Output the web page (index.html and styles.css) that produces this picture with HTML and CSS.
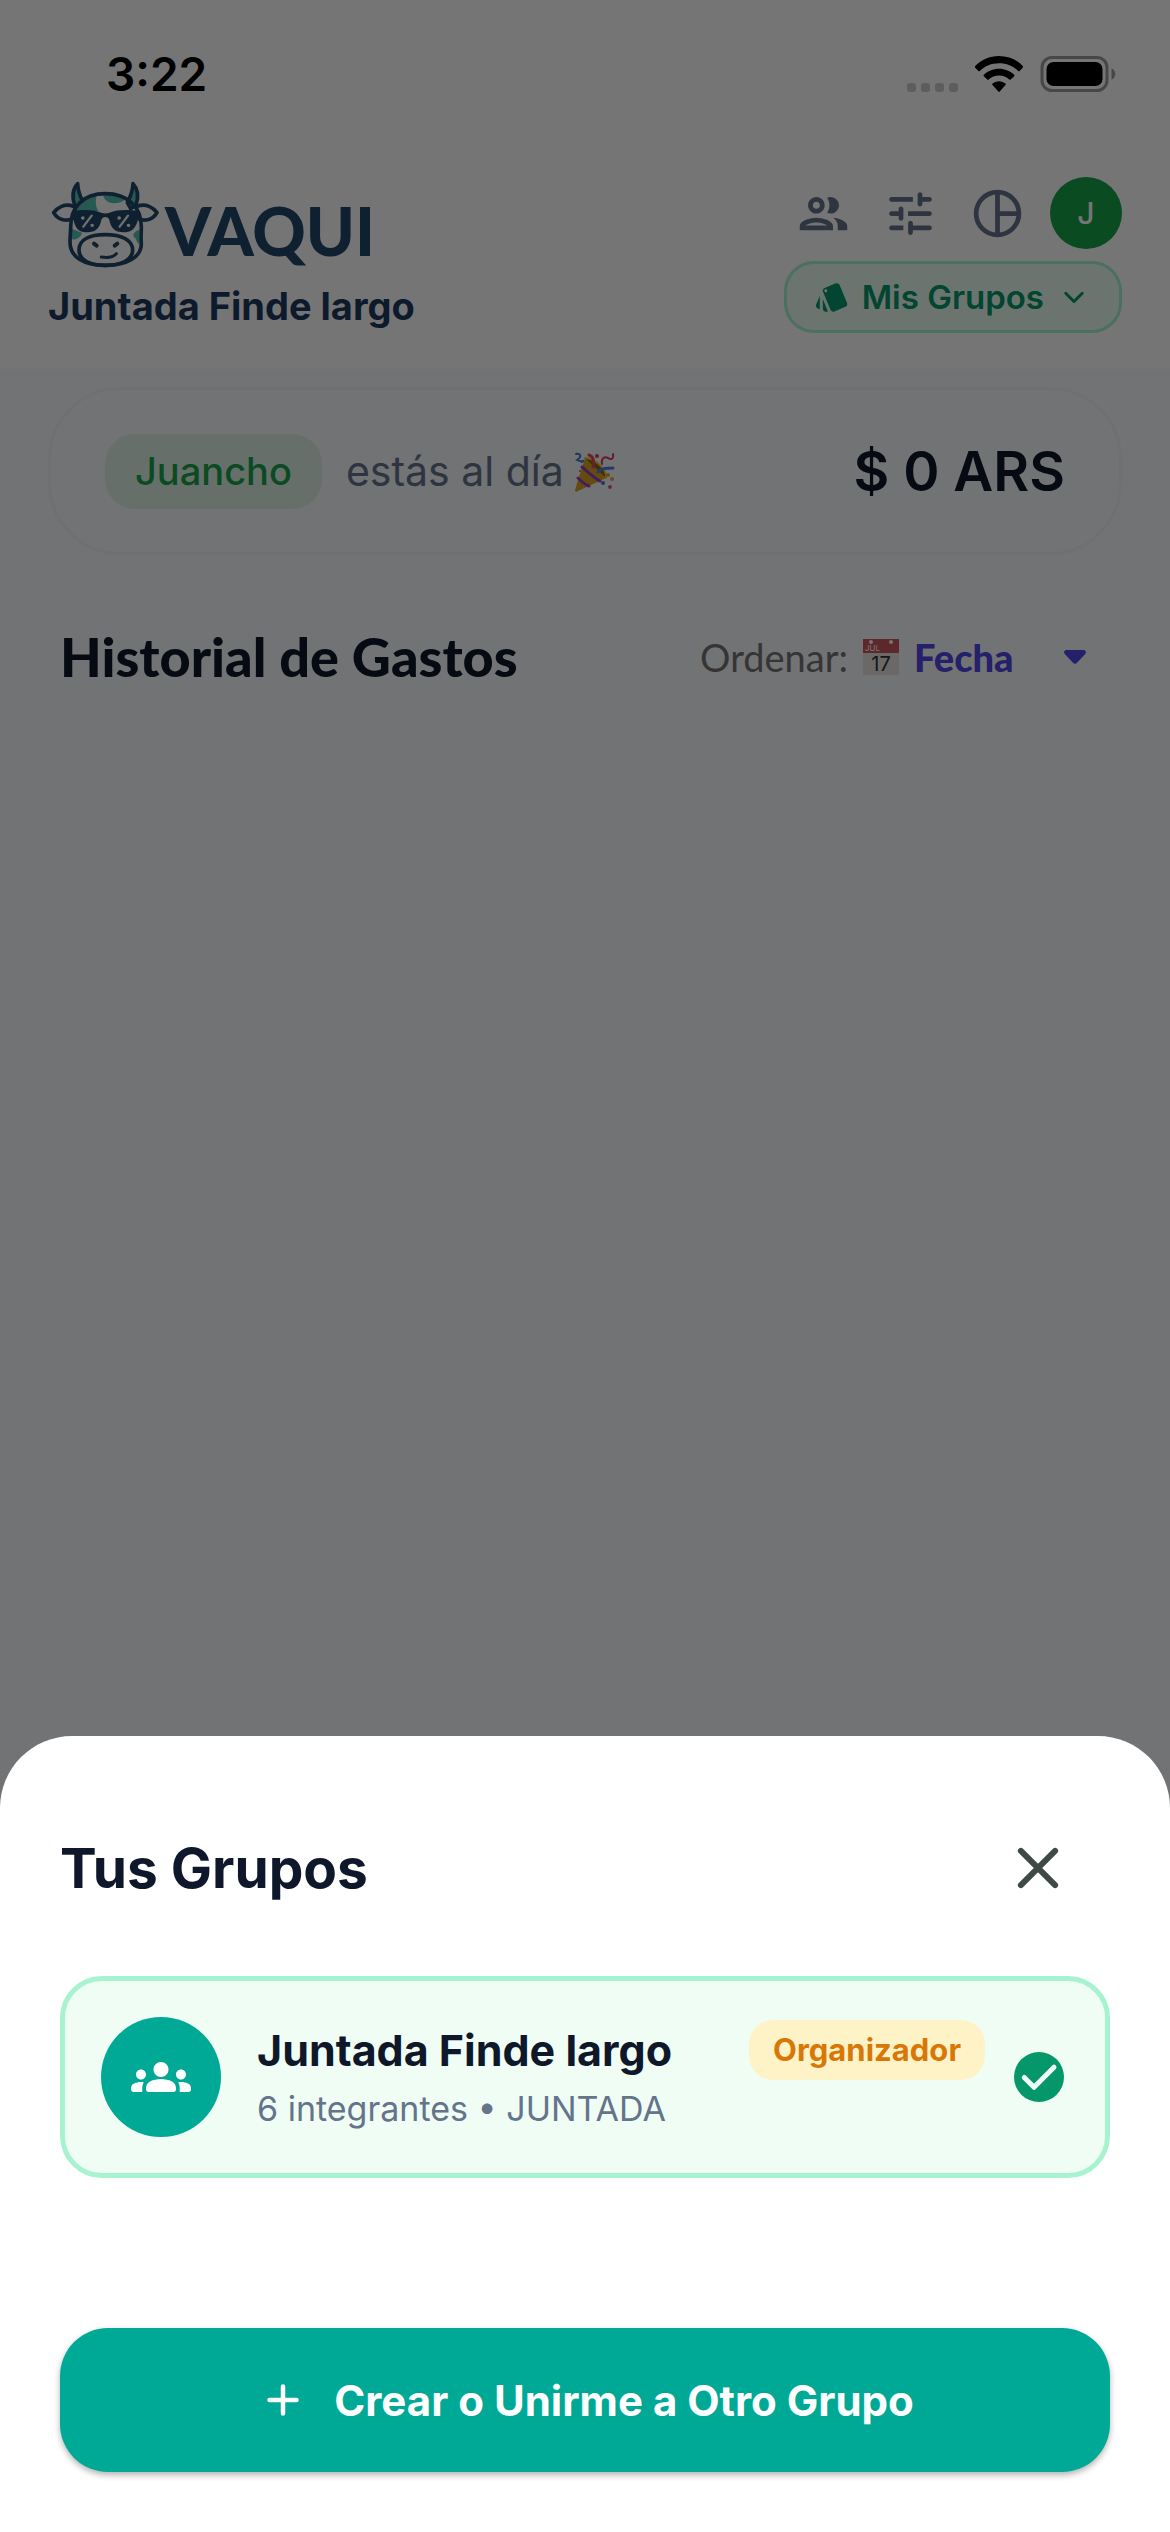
FILE: index.html
```html
<!DOCTYPE html>
<html lang="es">
<head>
    <meta charset="UTF-8">
    <meta name="viewport" content="width=device-width, initial-scale=1.0">
    <title>Vaqui - Tus Grupos</title>
    <link rel="stylesheet" href="styles.css">
</head>
<body>
    <div class="app">
        <div class="top">
            <div class="status-bar">
                <span class="time">3:22</span>
                <div class="status-icons">
                    <svg class="signal" viewBox="0 0 51 36" fill="#cbcbcb">
                        <rect x="0" y="27" width="9" height="9" rx="3"/>
                        <rect x="14" y="27" width="9" height="9" rx="3"/>
                        <rect x="28" y="27" width="9" height="9" rx="3"/>
                        <rect x="42" y="27" width="9" height="9" rx="3"/>
                    </svg>
                    <svg class="wifi" viewBox="0 0 48 36">
                        <path d="M24 0C14.500 0 6 3.800 0 10.200c-.4.400-.4 1 0 1.400l3.400 3.400c.4.400 1 .4 1.400 0C9.800 10 16.500 7.300 24 7.300S38.200 10 43.200 15c.4.400 1 .4 1.400 0l3.400-3.400c.4-.4.4-1 0-1.400C42 3.800 33.500 0 24 0z"/>
                        <path d="M24 12.700c-6 0-11.300 2.300-15.200 6.100-.4.400-.4 1 0 1.400l3.500 3.400c.4.400 1 .4 1.400 0 2.700-2.500 6.300-4 10.300-4s7.600 1.500 10.300 4c.4.400 1 .4 1.400 0l3.500-3.400c.4-.4.4-1 0-1.400-3.900-3.800-9.200-6.100-15.200-6.100z"/>
                        <path d="M24 25.200c-2.500 0-4.800.9-6.500 2.400-.4.400-.4.900 0 1.300l5.800 6.700c.4.400 1 .4 1.400 0l5.800-6.700c.4-.4.4-.9 0-1.300-1.700-1.500-4-2.400-6.500-2.400z"/>
                    </svg>
                    <svg class="battery" viewBox="0 0 75 36">
                        <rect x="1.500" y="1.500" width="65" height="33" rx="10" fill="none" stroke="#9c9c9c" stroke-width="3"/>
                        <rect x="6" y="6" width="56" height="24" rx="7"/>
                        <path d="M71 12.500c5 1.500 5 9.500 0 11z" fill="#9c9c9c"/>
                    </svg>
                </div>
            </div>

            <header class="header">
                <div class="brand">
                    <div class="logo">
                        <svg class="cow" viewBox="0 0 342 282" fill="none" stroke="#224869" stroke-width="11" stroke-linecap="round" stroke-linejoin="round">
                            <path d="M106 77C98 61 90 48 89 20c-17 18-16 42-9 64l16 11z" fill="#55c2b6"/>
                            <path d="M238 77c8-16 16-29 17-57 17 18 16 42 9 64l-16 11z" fill="#55c2b6"/>
                            <path d="M76 88C50 78 28 92 17 107c16 25 40 26 57 18"/>
                            <path d="M268 88c26-10 48 4 59 19-16 25-40 26-57 18"/>
                            <path d="M146 54c-28 4-56 24-67 48h72c-10-15-8-33-5-48z" fill="#55c2b6" stroke="none"/>
                            <path d="M166 55c30-4 52 3 64 14-20 14-58 16-64-14zM72 155c12 6 26 10 30 12-4 13-14 22-31 20zM274 158c-17 6-24 18-12 25 4 9 6 14 12 20z" fill="#55c2b6" stroke="none"/>
                            <path d="M68 150C68 90 105 50 172 50s108 40 108 100c0 20-2 30 0 50 0 40-42 65-108 65S66 240 66 195c0-18 2-30 2-45z"/>
                            <path d="M172 173c46 0 82 14 82 46 0 31-36 46-82 46s-79-15-79-46c0-32 33-46 79-46z"/>
                            <path d="M72 103c30-5 62-6 88 4 8 3 16 3 24 0 26-10 60-9 90-4v18c-5 3-4 10-7 17-8 20-20 28-40 28-28 0-38-14-43-37-3-12-21-12-24 0-5 23-15 37-43 37-20 0-32-8-38-28-2-7-2-14-7-17z" fill="#224869" stroke="none"/>
                            <g stroke="#eef5f8" stroke-width="7">
                                <path d="M131 116l-25 33M240 116l-25 33"/>
                                <path d="M104 123h1M132 145h1M213 123h1M241 145h1" stroke-width="10"/>
                            </g>
                            <path d="M138 200l8 6M208 200l-8 6" stroke-width="12"/>
                            <path d="M160 240c18 3 36 0 45-10" stroke-width="9"/>
                        </svg>
                        <span class="logo-text">VAQUI</span>
                    </div>
                    <h1 class="group-name">Juntada Finde largo</h1>
                </div>

                <div class="header-actions">
                    <div class="icon-row">
                        <button class="icon-btn" aria-label="Integrantes">
                            <svg viewBox="0 0 24 24" fill="currentColor"><path d="M9 13.750c-2.340 0-7 1.170-7 3.500V19h14v-1.750c0-2.330-4.660-3.500-7-3.500zM4.340 17c.84-.58 2.870-1.250 4.660-1.250s3.820.67 4.660 1.250H4.340zM9 12c1.930 0 3.500-1.570 3.500-3.500S10.930 5 9 5 5.500 6.570 5.500 8.500 7.070 12 9 12zm0-5c.83 0 1.500.67 1.500 1.500S9.830 10 9 10s-1.500-.67-1.500-1.500S8.170 7 9 7zm7.040 6.810c1.160.84 1.960 1.960 1.960 3.440V19h4v-1.750c0-2.020-3.500-3.170-5.960-3.440zM15 12c1.930 0 3.500-1.570 3.500-3.500S16.930 5 15 5c-.54 0-1.040.13-1.500.35.63.89 1 1.980 1 3.150s-.37 2.260-1 3.150c.46.22.96.35 1.500.35z"/></svg>
                        </button>
                        <button class="icon-btn" aria-label="Ajustes">
                            <svg viewBox="0 0 24 24" fill="currentColor"><path d="M3 18c0 .55.45 1 1 1h5v-2H4c-.55 0-1 .45-1 1zM3 6c0 .55.45 1 1 1h9V5H4c-.55 0-1 .45-1 1zm10 14v-1h7c.55 0 1-.45 1-1s-.45-1-1-1h-7v-1c0-.55-.45-1-1-1s-1 .45-1 1v4c0 .55.45 1 1 1s1-.45 1-1zM7 10v1H4c-.55 0-1 .45-1 1s.45 1 1 1h3v1c0 .55.45 1 1 1s1-.45 1-1v-4c0-.55-.45-1-1-1s-1 .45-1 1zm14 2c0-.55-.45-1-1-1h-9v2h9c.55 0 1-.45 1-1zm-5-3c.55 0 1-.45 1-1V7h3c.55 0 1-.45 1-1s-.45-1-1-1h-3V4c0-.55-.45-1-1-1s-1 .45-1 1v4c0 .55.45 1 1 1z"/></svg>
                        </button>
                        <button class="icon-btn" aria-label="Resumen">
                            <svg viewBox="0 0 24 24" fill="none" stroke="currentColor" stroke-width="2"><circle cx="12" cy="12" r="9"/><path d="M12 3v18M12 12h9"/></svg>
                        </button>
                        <button class="avatar">J</button>
                    </div>
                    <button class="groups-btn">
                        <svg viewBox="0 0 24 24" fill="currentColor"><path d="M2.530 19.650l1.340.56v-9.030l-2.430 5.860c-.41 1.020.08 2.190 1.090 2.610zm19.500-3.700L17.070 3.980c-.31-.75-1.040-1.210-1.810-1.230-.26 0-.53.040-.79.15L7.100 5.950c-.75.310-1.210 1.030-1.230 1.800-.01.27.04.54.15.8l4.960 11.970c.31.76 1.050 1.220 1.830 1.230.26 0 .52-.05.77-.15l7.360-3.050c1.020-.42 1.510-1.590 1.090-2.600zM7.880 8.750c-.55 0-1-.45-1-1s.45-1 1-1 1 .45 1 1-.45 1-1 1zm-2 11c0 1.100.9 2 2 2h1.450l-3.450-8.340v6.340z"/></svg>
                        Mis Grupos
                        <svg viewBox="0 0 24 24" fill="none" stroke="currentColor" stroke-width="2" stroke-linecap="round" stroke-linejoin="round"><path d="M6.500 9.500L12 15l5.500-5.500"/></svg>
                    </button>
                </div>
            </header>
        </div>

        <main>
            <section class="balance">
                <span class="chip">Juancho</span>
                <span class="balance-text">estás al día</span>
                <svg class="party" viewBox="0 0 52 52" fill="none" stroke-linecap="round" role="img" aria-label="Fiesta">
                    <path d="M15 13L5 45c0 2 2 2 3 1l28-13C31 27 21 17 15 13z" fill="#d9a520"/>
                    <path d="M15 13c9 0 22 11 21 20" fill="#8a6516" stroke="#f0c43c" stroke-width="2"/>
                    <path d="M12 22c6 5 12 11 18 14M8 33c4 4 8 7 11 8" stroke="#9a3fc4" stroke-width="3"/>
                    <path d="M19 10c5 1 5 6 4 12" stroke="#e0476a" stroke-width="3"/>
                    <path d="M28 27c4-4 9-4 15-4" stroke="#4a86dc" stroke-width="3"/>
                    <path d="M6 9c5-1 6 3 1 6 5 3 8-1 5 2" stroke="#3f7ad6" stroke-width="2"/>
                    <path d="M43 9c1 5-2 6-5 4-4-2-7 1-6 6" stroke="#d8405f" stroke-width="2"/>
                    <g stroke="none">
                        <circle cx="27" cy="11" r="2" fill="#d8405f"/><circle cx="10" cy="26" r="1" fill="#e0476a"/>
                        <circle cx="33" cy="38" r="2" fill="#3f7ad6"/><circle cx="38" cy="30" r="2" fill="#d9a520"/>
                        <circle cx="42" cy="34" r="2" fill="#e8a33c"/><circle cx="40" cy="42" r="2" fill="#d8607f"/>
                    </g>
                </svg>
                <strong class="amount">$ 0 ARS</strong>
            </section>

            <section class="history-head">
                <h2>Historial de Gastos</h2>
                <div class="sort">
                    <label for="sort">Ordenar:</label>
                    <svg class="calendar" viewBox="0 0 36 36" aria-hidden="true">
                        <rect width="36" height="36" fill="#e6e4e2"/>
                        <rect width="36" height="14" fill="#c9575a"/>
                        <circle cx="8" cy="3" r="2" fill="#fff"/><circle cx="28" cy="3" r="2" fill="#fff"/>
                        <text x="2" y="12" class="cal-month">JUL</text>
                        <text x="18" y="32" class="cal-day">17</text>
                    </svg>
                    <select id="sort">
                        <option>Fecha</option>
                    </select>
                    <svg class="caret" viewBox="0 0 22 14" fill="currentColor"><path d="M2.500 0h17c2.200 0 3.300 2.500 1.700 4l-8.200 8.800c-1.200 1.200-2.800 1.200-4 0L.8 4C-.8 2.500.300 0 2.500 0z"/></svg>
                </div>
            </section>
        </main>
    </div>

    <div class="overlay">
        <div class="sheet" role="dialog" aria-labelledby="sheet-title">
            <div class="sheet-head">
                <h2 id="sheet-title">Tus Grupos</h2>
                <button class="close-btn" aria-label="Cerrar">
                    <svg viewBox="0 0 24 24" fill="none" stroke="currentColor" stroke-width="2" stroke-linecap="round"><path d="M6.300 6.300l11.400 11.400M17.700 6.300L6.300 17.700"/></svg>
                </button>
            </div>

            <button class="group-card">
                <span class="group-icon">
                    <svg viewBox="0 0 24 24" fill="currentColor"><path d="M12 12.750c1.630 0 3.070.39 4.240.9 1.080.48 1.760 1.560 1.760 2.730V17c0 .55-.45 1-1 1H7c-.55 0-1-.45-1-1v-.61c0-1.180.68-2.260 1.760-2.730 1.170-.52 2.610-.91 4.240-.91zM4 13c1.100 0 2-.9 2-2s-.9-2-2-2-2 .9-2 2 .9 2 2 2zm1.130 1.100c-.37-.06-.74-.1-1.130-.1-.99 0-1.930.21-2.780.58C.48 14.900 0 15.620 0 16.430V17c0 .55.45 1 1 1h3.500v-1.610c0-.83.23-1.610.63-2.290zM20 13c1.100 0 2-.9 2-2s-.9-2-2-2-2 .9-2 2 .9 2 2 2zm4 3.430c0-.81-.48-1.530-1.220-1.850-.85-.37-1.790-.58-2.780-.58-.39 0-.76.040-1.130.1.400.68.630 1.460.63 2.290V18H23c.55 0 1-.45 1-1v-.57zM12 6c1.660 0 3 1.340 3 3s-1.340 3-3 3-3-1.340-3-3 1.340-3 3-3z"/></svg>
                </span>
                <span class="group-info">
                    <span class="group-row">
                        <span class="group-title">Juntada Finde largo</span>
                        <span class="badge">Organizador</span>
                    </span>
                    <span class="group-meta">6 integrantes • JUNTADA</span>
                </span>
                <svg class="check" viewBox="0 0 24 24"><circle cx="12" cy="12" r="10" fill="#059669"/><path d="M6.100 12.200l3.900 3.900 8-8" fill="none" stroke="#f0fdf4" stroke-width="2" stroke-linecap="round" stroke-linejoin="round"/></svg>
            </button>

            <button class="create-btn">
                <svg viewBox="0 0 24 24" fill="none" stroke="currentColor" stroke-width="2" stroke-linecap="round"><path d="M12 6v12M6 12h12"/></svg>
                Crear o Unirme a Otro Grupo
            </button>
        </div>
    </div>
</body>
</html>
```
FILE: styles.css
```css
* {
    margin: 0;
    padding: 0;
    box-sizing: border-box;
}

body {
    font-family: Inter, Arial, sans-serif;
    color: #0f172a;
    background-color: #f8fafc;
}

button, select {
    font-family: inherit;
    border: none;
    background: none;
    color: inherit;
    cursor: pointer;
}

svg {
    display: block;
    flex-shrink: 0;
}

.app {
    min-height: 100vh;
}

.top {
    background-color: white;
}

/* status bar */
.status-bar {
    display: flex;
    justify-content: space-between;
    align-items: center;
    height: 177px;
    padding: 0 54px 30px 106px;
}

.time {
    color: black;
    font-size: 46px;
    font-weight: 600;
}

.status-icons {
    display: flex;
    gap: 17px;
}

.signal {
    width: 51px;
    height: 36px;
}

.wifi {
    width: 48px;
    height: 36px;
}

.battery {
    width: 76px;
    height: 36px;
}

/* header */
.header {
    display: flex;
    justify-content: space-between;
    padding: 0 48px 36px;
}

.logo {
    display: flex;
    align-items: flex-start;
    gap: 3px;
    height: 102px;
}

.cow {
    width: 114px;
    height: 94px;
}

.logo-text {
    font-family: Lato, sans-serif;
    font-size: 66px;
    font-weight: 900;
    line-height: 108px;
    color: #224869;
}

.group-name {
    font-size: 38px;
    font-weight: 700;
    line-height: 54px;
    color: #1e3a5f;
}

.header-actions {
    display: flex;
    flex-direction: column;
    align-items: flex-end;
    gap: 12px;
}

.icon-row {
    display: flex;
    align-items: center;
    gap: 30px;
}

.icon-btn {
    color: #64748b;
}

.icon-btn svg {
    width: 57px;
    height: 57px;
}

.avatar {
    width: 72px;
    height: 72px;
    margin-left: -6px;
    border-radius: 50%;
    background-color: #16a34a;
    color: white;
    font-size: 30px;
    font-weight: 500;
}

.groups-btn {
    display: flex;
    align-items: center;
    gap: 12px;
    height: 72px;
    padding: 0 27px;
    border: 3px solid #a7f3d0;
    border-radius: 30px;
    background-color: #ecfdf5;
    color: #059669;
    font-size: 33px;
    font-weight: 600;
}

.groups-btn svg {
    width: 36px;
    height: 36px;
}

/* balance */
.balance {
    display: flex;
    align-items: center;
    margin: 18px 48px 0;
    padding: 0 54px;
    height: 168px;
    border: 3px solid #f1f5f9;
    border-radius: 72px;
}

.chip {
    padding: 0 30px;
    border-radius: 30px;
    background-color: #dff1e8;
    color: #16a34a;
    font-size: 38px;
    font-weight: 500;
    line-height: 75px;
}

.balance-text {
    margin-left: 24px;
    color: #64748b;
    font-size: 41px;
}

.party {
    width: 52px;
    height: 52px;
    margin-left: 6px;
}

.amount {
    margin-left: auto;
    font-size: 55px;
    font-weight: 600;
}

/* history */
.history-head {
    display: flex;
    justify-content: space-between;
    align-items: center;
    margin-top: 72px;
    padding: 0 84px 0 60px;
    font-family: Lato, sans-serif;
}

.history-head h2 {
    font-size: 54px;
    font-weight: 900;
    line-height: 60px;
}

.sort {
    display: flex;
    align-items: center;
    color: #757575;
    font-size: 38px;
}

.calendar {
    width: 36px;
    height: 36px;
    margin: 0 15px;
}

.cal-month {
    font: 8px Inter, sans-serif;
    fill: white;
}

.cal-day {
    font: 20px Inter, sans-serif;
    fill: #333;
    text-anchor: middle;
}

.sort select {
    appearance: none;
    color: #4f46e5;
    font-size: 38px;
    font-weight: 900;
}

.caret {
    width: 22px;
    height: 14px;
    margin-left: 50px;
    color: #4f46e5;
}

/* bottom sheet */
.overlay {
    position: fixed;
    inset: 0;
    display: flex;
    flex-direction: column;
    justify-content: flex-end;
    background-color: rgba(0, 0, 0, 0.54);
}

.sheet {
    display: flex;
    flex-direction: column;
    padding: 60px;
    border-radius: 72px 72px 0 0;
    background-color: white;
}

.sheet-head {
    display: flex;
    justify-content: space-between;
    align-items: center;
    margin-bottom: 36px;
}

.sheet-head h2 {
    font-size: 55px;
    font-weight: 700;
}

.close-btn {
    padding: 36px;
    color: #3f4946;
}

.close-btn svg {
    width: 72px;
    height: 72px;
}

.group-card {
    display: flex;
    align-items: center;
    padding: 36px;
    border: 5px solid #a7f3d0;
    border-radius: 42px;
    background-color: #f0fdf4;
    text-align: left;
}

.group-icon {
    padding: 30px;
    border-radius: 50%;
    background-color: #00a996;
    color: white;
}

.group-icon svg {
    width: 60px;
    height: 60px;
}

.group-info {
    display: flex;
    flex-direction: column;
    flex: 1;
    margin: 0 24px 0 36px;
    padding-top: 3px;
}

.group-row {
    display: flex;
    justify-content: space-between;
    align-items: center;
}

.group-title {
    font-size: 43px;
    font-weight: 700;
}

.badge {
    padding: 0 24px;
    border-radius: 24px;
    background-color: #fef3c7;
    color: #d97706;
    font-size: 31px;
    font-weight: 700;
    line-height: 60px;
}

.group-meta {
    color: #64748b;
    font-size: 34px;
    line-height: 57px;
}

.check {
    width: 60px;
    height: 60px;
}

.create-btn {
    display: flex;
    justify-content: center;
    align-items: center;
    gap: 24px;
    height: 144px;
    margin-top: 150px;
    border-radius: 48px;
    background-color: #00a996;
    box-shadow: 0 3px 6px rgba(0, 0, 0, 0.3);
    color: white;
    font-size: 42px;
    font-weight: 700;
}

.create-btn svg {
    width: 54px;
    height: 54px;
}
```
